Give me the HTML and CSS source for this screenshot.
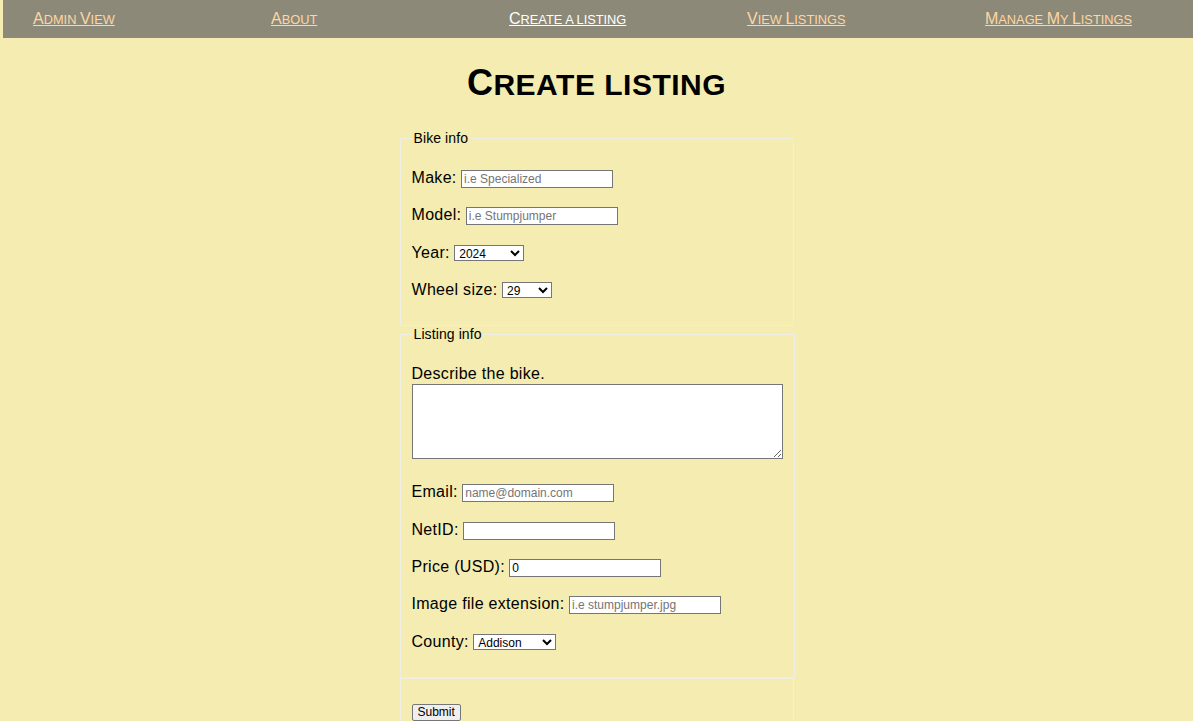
FILE: index.html
```html
<!DOCTYPE html>
<html lang="en">
<head>
<meta charset="utf-8">
<title>Create listing</title>
<link rel="stylesheet" href="styles.css">
</head>
<body>
<nav class="topnav">
  <a class="navlink" href="#"><span class="cap">A</span>dmin <span class="cap">V</span>iew</a>
  <a class="navlink" href="#"><span class="cap">A</span>bout</a>
  <a class="navlink active" href="#"><span class="cap">C</span>reate a listing</a>
  <a class="navlink" href="#"><span class="cap">V</span>iew <span class="cap">L</span>istings</a>
  <a class="navlink" href="#"><span class="cap">M</span>anage <span class="cap">M</span>y <span class="cap">L</span>istings</a>
</nav>
<h1 class="title"><span class="cap">C</span>reate listing</h1>
<form class="listing-form">
  <fieldset class="group">
    <legend class="legend">Bike info</legend>
    <p class="row"><label for="make">Make:</label> <input class="field" id="make" type="text" placeholder="i.e Specialized"></p>
    <p class="row"><label for="model">Model:</label> <input class="field" id="model" type="text" placeholder="i.e Stumpjumper"></p>
    <p class="row"><label for="year">Year:</label> <select class="pick pick-year" id="year">
      <option>2024</option><option>2023</option><option>2022</option><option>2021</option><option>2020</option>
    </select></p>
    <p class="row"><label for="wheel">Wheel size:</label> <select class="pick pick-wheel" id="wheel">
      <option>29</option><option>27.5</option><option>26</option>
    </select></p>
  </fieldset>
  <fieldset class="group">
    <legend class="legend">Listing info</legend>
    <p class="row row-desc"><label for="desc">Describe the bike.</label><br><textarea class="desc" id="desc"></textarea></p>
    <p class="row"><label for="email">Email:</label> <input class="field" id="email" type="email" placeholder="name@domain.com"></p>
    <p class="row"><label for="netid">NetID:</label> <input class="field" id="netid" type="text"></p>
    <p class="row"><label for="price">Price (USD):</label> <input class="field" id="price" type="number" value="0"></p>
    <p class="row"><label for="img">Image file extension:</label> <input class="field" id="img" type="text" placeholder="i.e stumpjumper.jpg"></p>
    <p class="row"><label for="county">County:</label> <select class="pick pick-county" id="county">
      <option>Addison</option><option>Bennington</option><option>Caledonia</option><option>Chittenden</option><option>Essex</option><option>Franklin</option><option>Grand Isle</option><option>Lamoille</option><option>Orange</option><option>Orleans</option><option>Rutland</option><option>Washington</option><option>Windham</option><option>Windsor</option>
    </select></p>
  </fieldset>
  <fieldset class="group">
    <p class="row"><button class="submit" type="submit">Submit</button></p>
  </fieldset>
</form>
</body>
</html>
```
FILE: styles.css
```css
html, body {
  margin: 0;
  padding: 0;
  background: #f4ecb0;
  font-family: "Liberation Sans", Arial, sans-serif;
  color: #000;
}

.topnav {
  margin-left: 3px;
  height: 38px;
  background: #8c8978;
  display: grid;
  grid-template-columns: repeat(5, 1fr);
  align-items: center;
}

.navlink {
  padding-left: 30px;
  font-size: 12.8px;
  line-height: 18px;
  text-transform: uppercase;
  color: #fdd6a4;
  text-decoration: underline;
  justify-self: start;
}

.navlink .cap {
  font-size: 16px;
}

.navlink.active {
  color: #ffffff;
}

.title {
  margin: 24px 0 24px;
  text-align: center;
  font-size: 30px;
  font-weight: bold;
  text-transform: uppercase;
  letter-spacing: 0.5px;
  line-height: 42px;
}

.title .cap {
  font-size: 36px;
}

.listing-form {
  width: 398px;
  margin: 0 auto;
}

.group {
  margin: 0 2px;
  padding: 5px 11px 9px;
  border: 1px solid #efeee6;
}

.legend {
  padding: 0 2px;
  font-size: 14px;
  line-height: 16px;
  letter-spacing: 0.1px;
}

.row {
  margin: 16px 0;
  font-size: 16px;
  line-height: 21.3px;
}

.row-desc {
  padding-bottom: 6px;
}

.row label {
  letter-spacing: 0.3px;
}

.field {
  box-sizing: border-box;
  width: 152px;
  height: 18px;
  margin: 0;
  padding: 1px 2px;
  border: 1px solid #767676;
  background: #fff;
  font-family: "Liberation Sans", Arial, sans-serif;
  font-size: 12px;
  line-height: normal;
  color: #000;
}

.field::placeholder {
  color: #757575;
}

.field::-webkit-outer-spin-button,
.field::-webkit-inner-spin-button {
  -webkit-appearance: none;
  margin: 0;
}

.field[type="number"] {
  -moz-appearance: textfield;
}

.pick {
  box-sizing: border-box;
  height: 16px;
  margin: 0;
  padding: 0;
  border: 1px solid #767676;
  border-radius: 0;
  background: #fff;
  font-family: "Liberation Sans", Arial, sans-serif;
  font-size: 12px;
  color: #000;
}

.pick-year { width: 70px; }
.pick-wheel { width: 50px; }
.pick-county { width: 83px; }

.desc {
  display: block;
  box-sizing: border-box;
  width: 371px;
  height: 75px;
  margin: 0;
  border: 1px solid #767676;
  background: #fff;
}

.submit {
  box-sizing: border-box;
  height: 17px;
  margin: 0;
  padding: 0 5px;
  border: 1px solid #767676;
  border-radius: 2px;
  background: #efefef;
  font-family: "Liberation Sans", Arial, sans-serif;
  font-size: 12px;
  line-height: 15px;
  color: #000;
  vertical-align: baseline;
}
```
